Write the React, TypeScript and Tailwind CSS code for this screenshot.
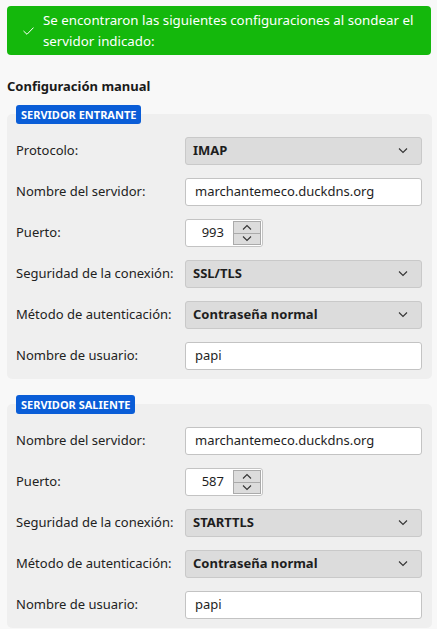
import React from 'react'

const font = { fontFamily: '"Noto Sans", "Open Sans", sans-serif' }

function Chevron({ up = false }: { up?: boolean }) {
  return (
    <svg width="10" height="6" viewBox="0 0 10 6" className="block">
      <path
        d={up ? 'M1 5.5 L5 1.5 L9 5.5' : 'M1 0.5 L5 4.5 L9 0.5'}
        fill="none"
        stroke="#333"
        strokeWidth="1.1"
      />
    </svg>
  )
}

function Select({ value }: { value: string }) {
  return (
    <div className="h-[28px] flex items-center justify-between pl-[7px] pr-[13px] rounded-[3px] bg-[#dcdcdc] border border-[#c9c9c9] text-[13px] font-bold text-[#1e1e1e]">
      <span>{value}</span>
      <Chevron />
    </div>
  )
}

function TextInput({ value }: { value: string }) {
  return (
    <div className="h-[28px] flex items-center px-[9px] rounded-[3px] bg-white border border-[#c3c3c3] text-[13px] text-[#1e1e1e]">
      {value}
    </div>
  )
}

function PortInput({ value }: { value: string }) {
  return (
    <div className="h-[28px] w-[78px] flex items-stretch rounded-[3px] bg-white border border-[#c3c3c3] text-[13px] text-[#1e1e1e]">
      <div className="flex-1 flex items-center justify-end pr-[9px]">{value}</div>
      <div className="w-[28px] my-[1px] mr-[1px] flex flex-col border border-[#aaaaaa] bg-[#dcdcdc]">
        <div className="flex-1 flex items-center justify-center border-b border-[#aaaaaa]">
          <Chevron up />
        </div>
        <div className="flex-1 flex items-center justify-center">
          <Chevron />
        </div>
      </div>
    </div>
  )
}

function Row({ label, children }: { label: string; children: React.ReactNode }) {
  return (
    <div className="flex items-center">
      <div className="w-[169px] shrink-0 whitespace-nowrap text-[13px] text-[#222]">{label}</div>
      <div className="flex-1">{children}</div>
    </div>
  )
}

function Section({ title, children }: { title: string; children: React.ReactNode }) {
  return (
    <div>
      <div className="relative z-10 ml-[9px] -mb-[10px] block w-fit h-[19px] px-[5px] rounded-[3px] bg-[#0a5dd7] text-white text-[11px] font-bold leading-[19px]">
        {title}
      </div>
      <div className="rounded-[5px] bg-[#efefef] pt-[23px] pb-[9px] pl-[9px] pr-[10px] flex flex-col gap-[13px]">
        {children}
      </div>
    </div>
  )
}

export default function App() {
  return (
    <div style={font} className="min-h-[629px] bg-[#f8f8f8] px-[7px] pt-[6px] overflow-hidden">
      <div className="h-[49px] w-[424px] flex items-center rounded-[4px] bg-[#14b80c] text-white text-[13.3px] leading-[21px]">
        <div className="w-[36px] shrink-0 flex justify-center pl-[6px]">
          <svg width="11" height="8" viewBox="0 0 11 8">
            <path d="M0.5 4 L4 7.3 L10.5 0.6" fill="none" stroke="white" strokeWidth="1" />
          </svg>
        </div>
        <div className="flex-1 pr-[12px]">
          Se encontraron las siguientes configuraciones al sondear el servidor indicado:
        </div>
      </div>

      <h2 className="mt-[21px] text-[13px] font-bold text-[#1a1a1a] leading-[20px]">Configuración manual</h2>

      <div className="mt-[9px] w-[425px]">
        <Section title="SERVIDOR ENTRANTE">
          <Row label="Protocolo:"><Select value="IMAP" /></Row>
          <Row label="Nombre del servidor:"><TextInput value="marchantemeco.duckdns.org" /></Row>
          <Row label="Puerto:"><PortInput value="993" /></Row>
          <Row label="Seguridad de la conexión:"><Select value="SSL/TLS" /></Row>
          <Row label="Método de autenticación:"><Select value="Contraseña normal" /></Row>
          <Row label="Nombre de usuario:"><TextInput value="papi" /></Row>
        </Section>

        <div className="mt-[16px]">
          <Section title="SERVIDOR SALIENTE">
            <Row label="Nombre del servidor:"><TextInput value="marchantemeco.duckdns.org" /></Row>
            <Row label="Puerto:"><PortInput value="587" /></Row>
            <Row label="Seguridad de la conexión:"><Select value="STARTTLS" /></Row>
            <Row label="Método de autenticación:"><Select value="Contraseña normal" /></Row>
            <Row label="Nombre de usuario:"><TextInput value="papi" /></Row>
          </Section>
        </div>
      </div>
    </div>
  )
}
